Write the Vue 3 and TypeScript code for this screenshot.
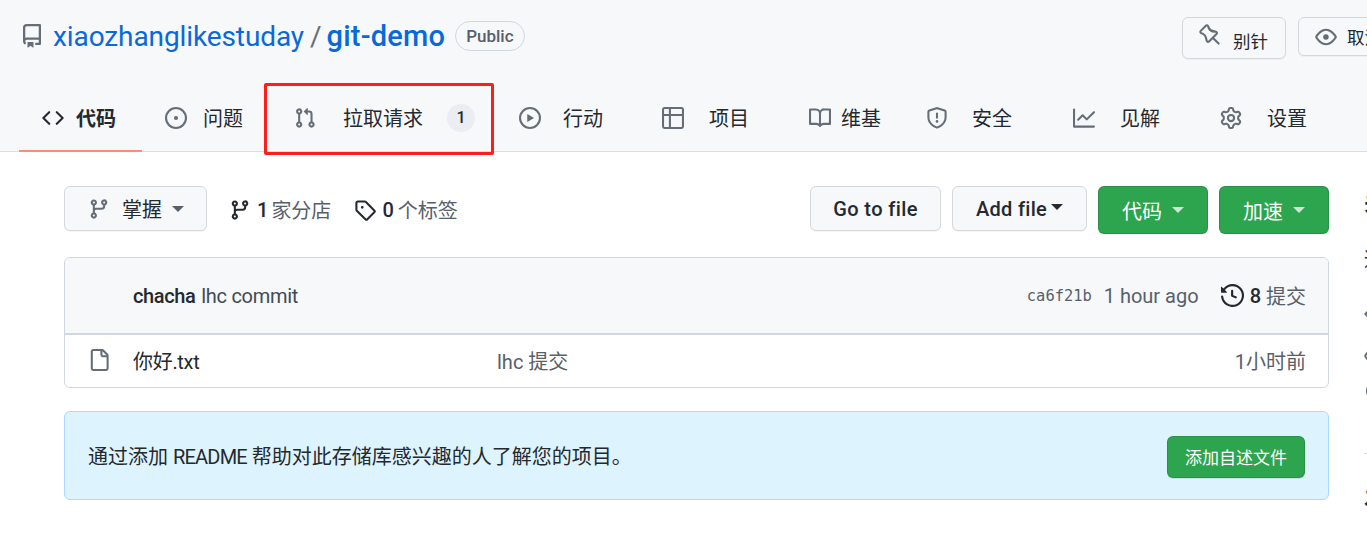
<script setup lang="ts">
interface Tab {
  label: string
  icon: string
  width: number
  gap: number
  active?: boolean
  counter?: string
}

// Octicons 16px
const icons: Record<string, string> = {
  code: 'M4.72 3.22a.75.75 0 0 1 1.06 1.06L2.06 8l3.72 3.72a.75.75 0 1 1-1.06 1.06L.47 8.53a.75.75 0 0 1 0-1.06l4.25-4.25Zm6.56 0a.75.75 0 1 0-1.06 1.06L13.94 8l-3.72 3.72a.75.75 0 1 0 1.06 1.06l4.25-4.25a.75.75 0 0 0 0-1.06l-4.25-4.25Z',
  issue: 'M8 9.5a1.5 1.5 0 1 0 0-3 1.5 1.5 0 0 0 0 3ZM8 0a8 8 0 1 1 0 16A8 8 0 0 1 8 0ZM1.5 8a6.5 6.5 0 1 0 13 0 6.5 6.5 0 0 0-13 0Z',
  pr: 'M1.5 3.25a2.25 2.25 0 1 1 3 2.122v5.256a2.251 2.251 0 1 1-1.5 0V5.372A2.25 2.25 0 0 1 1.5 3.25Zm5.677-.177L9.573.677A.25.25 0 0 1 10 .854V2.5h1A2.5 2.5 0 0 1 13.5 5v5.628a2.251 2.251 0 1 1-1.5 0V5a1 1 0 0 0-1-1h-1v1.646a.25.25 0 0 1-.427.177L7.177 3.427a.25.25 0 0 1 0-.354ZM3.75 2.5a.75.75 0 1 0 0 1.5.75.75 0 0 0 0-1.5Zm0 9.5a.75.75 0 1 0 0 1.5.75.75 0 0 0 0-1.5Zm8.25.75a.75.75 0 1 0 1.5 0 .75.75 0 0 0-1.5 0Z',
  play: 'M8 0a8 8 0 1 1 0 16A8 8 0 0 1 8 0ZM1.5 8a6.5 6.5 0 1 0 13 0 6.5 6.5 0 0 0-13 0Zm4.879-2.773 4.264 2.559a.25.25 0 0 1 0 .428l-4.264 2.559A.25.25 0 0 1 6 10.559V5.442a.25.25 0 0 1 .379-.215Z',
  table: 'M0 1.75C0 .784.784 0 1.75 0h12.5C15.216 0 16 .784 16 1.75v12.5A1.75 1.75 0 0 1 14.25 16H1.75A1.75 1.75 0 0 1 0 14.25ZM6.5 6.5v8h7.75a.25.25 0 0 0 .25-.25V6.5Zm8-1.5V1.75a.25.25 0 0 0-.25-.25H6.5V5Zm-13 1.5v7.75c0 .138.112.25.25.25H5v-8ZM5 5V1.5H1.75a.25.25 0 0 0-.25.25V5Z',
  book: 'M0 1.75A.75.75 0 0 1 .75 1h4.253c1.227 0 2.317.59 3 1.501A3.743 3.743 0 0 1 11.006 1h4.245a.75.75 0 0 1 .75.75v10.5a.75.75 0 0 1-.75.75h-4.507a2.25 2.25 0 0 0-1.591.659l-.622.621a.75.75 0 0 1-1.06 0l-.622-.621A2.25 2.25 0 0 0 5.258 13H.75a.75.75 0 0 1-.75-.75Zm7.251 10.324.004-5.073-.002-2.253A2.25 2.25 0 0 0 5.003 2.5H1.5v9h3.757a3.75 3.75 0 0 1 1.994.574ZM8.755 4.75l-.004 7.322a3.752 3.752 0 0 1 1.992-.572H14.5v-9h-3.495a2.25 2.25 0 0 0-2.25 2.25Z',
  shield: 'M7.467.133a1.748 1.748 0 0 1 1.066 0l5.25 1.68A1.75 1.75 0 0 1 15 3.48V7c0 1.566-.32 3.182-1.303 4.682-.983 1.498-2.585 2.813-5.032 3.855a1.697 1.697 0 0 1-1.33 0c-2.447-1.042-4.049-2.357-5.032-3.855C1.32 10.182 1 8.566 1 7V3.48a1.75 1.75 0 0 1 1.217-1.667Zm.61 1.429a.25.25 0 0 0-.153 0l-5.25 1.68a.25.25 0 0 0-.174.238V7c0 1.358.275 2.666 1.057 3.86.784 1.194 2.121 2.34 4.366 3.297a.196.196 0 0 0 .154 0c2.245-.956 3.582-2.104 4.366-3.298C13.225 9.666 13.5 8.36 13.5 7V3.48a.251.251 0 0 0-.174-.237l-5.25-1.68ZM8.75 4.75v3a.75.75 0 0 1-1.5 0v-3a.75.75 0 0 1 1.5 0ZM9 10.5a1 1 0 1 1-2 0 1 1 0 0 1 2 0Z',
  graph: 'M1.5 1.75V13.5h13.75a.75.75 0 0 1 0 1.5H.75a.75.75 0 0 1-.75-.75V1.75a.75.75 0 0 1 1.5 0Zm14.28 2.53-5.25 5.25a.75.75 0 0 1-1.06 0L7 7.06 4.28 9.78a.751.751 0 0 1-1.042-.018.751.751 0 0 1-.018-1.042l3.25-3.25a.75.75 0 0 1 1.06 0L10 7.94l4.72-4.72a.751.751 0 0 1 1.042.018.751.751 0 0 1 .018 1.042Z',
  gear: 'M8 0a8.2 8.2 0 0 1 .701.031C9.444.095 9.99.645 10.16 1.29l.288 1.107c.018.066.079.158.212.224.231.114.454.243.668.386.123.082.233.09.299.071l1.103-.303c.644-.176 1.392.021 1.82.63.27.385.506.792.704 1.218.315.675.111 1.422-.364 1.891l-.814.806c-.049.048-.098.147-.088.294.016.257.016.515 0 .772-.01.147.038.246.088.294l.814.806c.475.469.679 1.216.364 1.891a7.977 7.977 0 0 1-.704 1.217c-.428.61-1.176.807-1.82.63l-1.102-.302c-.067-.019-.177-.011-.3.071a5.909 5.909 0 0 1-.668.386c-.133.066-.194.158-.211.224l-.29 1.106c-.168.646-.715 1.196-1.458 1.26a8.006 8.006 0 0 1-1.402 0c-.743-.064-1.289-.614-1.458-1.26l-.289-1.106c-.018-.066-.079-.158-.212-.224a5.738 5.738 0 0 1-.668-.386c-.123-.082-.233-.09-.299-.071l-1.103.303c-.644.176-1.392-.021-1.82-.63a8.12 8.12 0 0 1-.704-1.218c-.315-.675-.111-1.422.363-1.891l.815-.806c.05-.048.098-.147.088-.294a6.214 6.214 0 0 1 0-.772c.01-.147-.038-.246-.088-.294l-.815-.806C.635 6.045.431 5.298.746 4.623a7.92 7.92 0 0 1 .704-1.217c.428-.61 1.176-.807 1.82-.63l1.102.302c.067.019.177.011.3-.071.214-.143.437-.272.668-.386.133-.066.194-.158.211-.224l.29-1.106C6.009.645 6.556.095 7.299.03 7.53.01 7.764 0 8 0Zm-.571 1.525c-.036.003-.108.036-.137.146l-.289 1.105c-.147.561-.549.967-.998 1.189-.173.086-.34.183-.5.29-.417.278-.97.423-1.529.27l-1.103-.303c-.109-.03-.175.016-.195.045-.22.312-.412.644-.573.99-.014.031-.021.11.059.19l.815.806c.411.406.562.957.53 1.456a4.709 4.709 0 0 0 0 .582c.032.499-.119 1.05-.53 1.456l-.815.806c-.081.08-.073.159-.059.19.162.346.353.677.573.989.02.03.085.076.195.046l1.102-.303c.56-.153 1.113-.008 1.53.27.161.107.328.204.501.29.447.222.85.629.997 1.189l.289 1.105c.029.109.101.143.137.146a6.6 6.6 0 0 0 1.142 0c.036-.003.108-.036.137-.146l.289-1.105c.147-.561.549-.967.998-1.189.173-.086.34-.183.5-.29.417-.278.97-.423 1.529-.27l1.103.303c.109.029.175-.016.195-.045.22-.313.411-.644.573-.99.014-.031.021-.11-.059-.19l-.815-.806c-.411-.406-.562-.957-.53-1.456a4.709 4.709 0 0 0 0-.582c-.032-.499.119-1.05.53-1.456l.815-.806c.081-.08.073-.159.059-.19a6.464 6.464 0 0 0-.573-.989c-.02-.03-.085-.076-.195-.046l-1.102.303c-.56.153-1.113.008-1.53-.27a4.44 4.44 0 0 0-.501-.29c-.447-.222-.85-.629-.997-1.189l-.289-1.105c-.029-.11-.101-.143-.137-.146a6.6 6.6 0 0 0-1.142 0ZM11 8a3 3 0 1 1-6 0 3 3 0 0 1 6 0ZM9.5 8a1.5 1.5 0 1 0-3.001.001A1.5 1.5 0 0 0 9.5 8Z',
  repo: 'M2 2.5A2.5 2.5 0 0 1 4.5 0h8.75a.75.75 0 0 1 .75.75v12.5a.75.75 0 0 1-.75.75h-2.5a.75.75 0 0 1 0-1.5h1.75v-2h-8a1 1 0 0 0-.714 1.7.75.75 0 1 1-1.072 1.05A2.495 2.495 0 0 1 2 11.5Zm10.5-1h-8a1 1 0 0 0-1 1v6.708A2.486 2.486 0 0 1 4.5 9h8ZM5 12.25a.25.25 0 0 1 .25-.25h3.5a.25.25 0 0 1 .25.25v3.25a.25.25 0 0 1-.4.2l-1.45-1.087a.249.249 0 0 0-.3 0L5.4 15.7a.25.25 0 0 1-.4-.2Z',
  pin: 'M4.456.734a1.75 1.75 0 0 1 2.826.504l.613 1.327a3.081 3.081 0 0 0 2.084 1.707l2.454.584c1.332.317 1.8 1.972.832 2.94L11.06 10l3.72 3.72a.748.748 0 0 1-.332 1.265.75.75 0 0 1-.73-.205L10 11.06l-2.204 2.205c-.968.968-2.623.5-2.94-.832l-.584-2.454a3.081 3.081 0 0 0-1.707-2.084l-1.327-.613a1.75 1.75 0 0 1-.504-2.826L4.456.734ZM5.92 1.866a.251.251 0 0 0-.404-.072L1.794 5.516a.25.25 0 0 0 .072.404l1.328.613A4.582 4.582 0 0 1 5.73 9.63l.584 2.454a.25.25 0 0 0 .42.12l5.47-5.47a.25.25 0 0 0-.12-.42L9.63 6.23a4.582 4.582 0 0 1-3.098-2.537Z',
  eye: 'M8 2c1.981 0 3.671.992 4.933 2.078 1.27 1.091 2.187 2.345 2.637 3.023a1.62 1.62 0 0 1 0 1.798c-.45.678-1.367 1.932-2.637 3.023C11.67 13.008 9.981 14 8 14c-1.981 0-3.671-.992-4.933-2.078C1.797 10.83.88 9.576.43 8.898a1.62 1.62 0 0 1 0-1.798c.45-.677 1.367-1.931 2.637-3.022C4.33 2.992 6.019 2 8 2ZM1.679 7.932a.12.12 0 0 0 0 .136c.411.622 1.241 1.75 2.366 2.717C5.176 11.758 6.527 12.5 8 12.5c1.473 0 2.825-.742 3.955-1.715 1.124-.967 1.954-2.096 2.366-2.717a.12.12 0 0 0 0-.136c-.412-.621-1.242-1.75-2.366-2.717C10.824 4.242 9.473 3.5 8 3.5c-1.473 0-2.825.742-3.955 1.715-1.124.967-1.954 2.096-2.366 2.717ZM8 10a2 2 0 1 1-.001-3.999A2 2 0 0 1 8 10Z',
  branch: 'M9.5 3.25a2.25 2.25 0 1 1 3 2.122V6A2.5 2.5 0 0 1 10 8.5H6a1 1 0 0 0-1 1v1.128a2.251 2.251 0 1 1-1.5 0V5.372a2.25 2.25 0 1 1 1.5 0v1.836A2.493 2.493 0 0 1 6 7h4a1 1 0 0 0 1-1v-.628A2.25 2.25 0 0 1 9.5 3.25Zm-6 0a.75.75 0 1 0 1.5 0 .75.75 0 0 0-1.5 0Zm8.25-.75a.75.75 0 1 0 0 1.5.75.75 0 0 0 0-1.5ZM4.25 12a.75.75 0 1 0 0 1.5.75.75 0 0 0 0-1.5Z',
  tag: 'M1 7.775V2.75C1 1.784 1.784 1 2.75 1h5.025c.464 0 .91.184 1.238.513l6.25 6.25a1.75 1.75 0 0 1 0 2.474l-5.026 5.026a1.75 1.75 0 0 1-2.474 0l-6.25-6.25A1.752 1.752 0 0 1 1 7.775Zm1.5 0c0 .066.026.13.073.177l6.25 6.25a.25.25 0 0 0 .354 0l5.025-5.025a.25.25 0 0 0 0-.354l-6.25-6.25a.25.25 0 0 0-.177-.073H2.75a.25.25 0 0 0-.25.25ZM6 5a1 1 0 1 1 0 2 1 1 0 0 1 0-2Z',
  history: 'm.427 1.927 1.215 1.215a8.002 8.002 0 1 1-1.6 5.685.75.75 0 1 1 1.493-.154 6.5 6.5 0 1 0 1.18-4.458l1.358 1.358A.25.25 0 0 1 3.896 6H.25A.25.25 0 0 1 0 5.75V2.104a.25.25 0 0 1 .427-.177ZM7.75 4a.75.75 0 0 1 .75.75v2.992l2.028.812a.75.75 0 0 1-.557 1.392l-2.5-1A.751.751 0 0 1 7 8.25v-3.5A.75.75 0 0 1 7.75 4Z',
  file: 'M2 1.75C2 .784 2.784 0 3.75 0h6.586c.464 0 .909.184 1.237.513l2.914 2.914c.329.328.513.773.513 1.237v9.586A1.75 1.75 0 0 1 13.25 16h-9.5A1.75 1.75 0 0 1 2 14.25Zm1.75-.25a.25.25 0 0 0-.25.25v12.5c0 .138.112.25.25.25h9.5a.25.25 0 0 0 .25-.25V6h-2.75A1.75 1.75 0 0 1 9 4.25V1.5Zm6.75.062V4.25c0 .138.112.25.25.25h2.688l-.011-.013-2.914-2.914-.013-.011Z',
}

const tabs: Tab[] = [
  { label: '代码', icon: 'code', width: 123, gap: 12, active: true },
  { label: '问题', icon: 'issue', width: 129, gap: 16 },
  { label: '拉取请求', icon: 'pr', width: 225, gap: 27, counter: '1' },
  { label: '行动', icon: 'play', width: 143, gap: 22 },
  { label: '项目', icon: 'table', width: 147, gap: 25 },
  { label: '维基', icon: 'book', width: 117, gap: 10 },
  { label: '安全', icon: 'shield', width: 147, gap: 24 },
  { label: '见解', icon: 'graph', width: 147, gap: 25 },
  { label: '设置', icon: 'gear', width: 110, gap: 25 },
]
</script>

<template>
  <div class="page">
    <header class="repo-head">
      <div class="title-row">
        <div class="title">
          <svg class="icon repo-icon" viewBox="0 0 16 16"><path :d="icons.repo" /></svg>
          <a class="owner">xiaozhanglikestuday</a>
          <span class="slash">/</span>
          <a class="name">git-demo</a>
          <span class="label">Public</span>
        </div>
        <div class="head-actions">
          <button class="head-btn pin-btn">
            <svg class="icon" viewBox="0 0 16 16"><path :d="icons.pin" /></svg>
            <span class="pin-text">别针</span>
          </button>
          <button class="head-btn watch-btn">
            <svg class="icon" viewBox="0 0 16 16"><path :d="icons.eye" /></svg>
            <span>取消关注</span>
          </button>
        </div>
      </div>
      <nav class="tabs">
        <a v-for="tab in tabs" :key="tab.label" class="tab" :class="{ active: tab.active }" :style="{ width: tab.width + 'px', gap: tab.gap + 'px' }">
          <svg class="icon" viewBox="0 0 16 16"><path :d="icons[tab.icon]" /></svg>
          <span class="tab-text">{{ tab.label }}</span>
          <span v-if="tab.counter" class="counter">{{ tab.counter }}</span>
        </a>
      </nav>
      <div class="highlight"></div>
    </header>

    <main class="content">
      <div class="repo-main">
        <div class="toolbar">
          <button class="btn branch-btn">
            <svg class="icon" viewBox="0 0 16 16"><path :d="icons.branch" /></svg>
            <span>掌握</span>
            <i class="caret"></i>
          </button>
          <a class="meta-link branches">
            <svg class="icon dark" viewBox="0 0 16 16"><path :d="icons.branch" /></svg>
            <b>1</b>
            <span class="meta-text">家分店</span>
          </a>
          <a class="meta-link tags">
            <svg class="icon dark" viewBox="0 0 16 16"><path :d="icons.tag" /></svg>
            <b>0</b>
            <span class="meta-text">个标签</span>
          </a>
          <div class="toolbar-right">
            <button class="btn go-btn">Go to file</button>
            <button class="btn add-btn">Add file<i class="caret dark-caret"></i></button>
            <button class="btn green">代码<i class="caret light-caret"></i></button>
            <button class="btn green">加速<i class="caret light-caret"></i></button>
          </div>
        </div>

        <section class="files">
          <div class="commit">
            <span class="author">chacha</span>
            <span class="message">lhc commit</span>
            <span class="commit-right">
              <code class="sha">ca6f21b</code>
              <span class="ago">1 hour ago</span>
              <span class="history">
                <svg class="icon dark" viewBox="0 0 16 16"><path :d="icons.history" /></svg>
                <b>8</b>
                <span class="history-text">提交</span>
              </span>
            </span>
          </div>
          <div class="file-row">
            <svg class="icon" viewBox="0 0 16 16"><path :d="icons.file" /></svg>
            <span class="file-name">你好.txt</span>
            <span class="file-msg">lhc 提交</span>
            <span class="file-age">1小时前</span>
          </div>
        </section>

        <section class="readme">
          <span>通过添加 <span class="readme-word">README</span> 帮助对此存储库感兴趣的人了解您的项目。</span>
          <button class="readme-btn">添加自述文件</button>
        </section>
      </div>

      <!-- 右侧栏只露出一条边 -->
      <aside class="side">
        <strong class="side-title">关于</strong>
        <span class="side-desc">通过</span>
        <svg class="icon side-icon code-icon" viewBox="0 0 16 16"><path :d="icons.code" /></svg>
        <svg class="icon side-icon eye-icon" viewBox="0 0 16 16"><path :d="icons.eye" /></svg>
        <svg class="icon side-icon dot-icon" viewBox="0 0 16 16"><path :d="icons.issue" /></svg>
        <hr class="side-rule" />
        <strong class="side-release">发布</strong>
      </aside>
    </main>
  </div>
</template>

<style scoped>
.page {
  width: 1367px;
  height: 537px;
  overflow: hidden;
  background: #fff;
  font-family: Roboto, "Noto Sans CJK SC", sans-serif;
  font-size: 20px;
  color: #24292f;
}

.icon {
  width: 22px;
  height: 22px;
  fill: #656d76;
  flex: none;
}

.icon.dark {
  fill: #24292f;
}

.repo-head {
  position: relative;
  height: 152px;
  box-sizing: border-box;
  background: #f6f8fa;
  border-bottom: 1px solid #d8dee4;
}

.title-row {
  height: 84px;
  display: flex;
  justify-content: space-between;
  padding-left: 20px;
}

.title {
  display: flex;
  align-items: center;
  height: 72px;
}

.repo-icon {
  width: 24px;
  height: 24px;
  margin-right: 9px;
}

.owner {
  font-size: 28px;
  letter-spacing: -0.1px;
  color: #0969da;
}

.slash {
  font-size: 28px;
  color: #656d76;
  margin: 0 5px 0 6px;
}

.name {
  font-size: 29px;
  font-weight: 500;
  letter-spacing: 0.2px;
  color: #0969da;
}

.label {
  margin-left: 10px;
  height: 28px;
  padding: 0 10px;
  border: 1px solid #d0d7de;
  border-radius: 15px;
  font-size: 17px;
  font-weight: 500;
  line-height: 28px;
  color: #57606a;
}

.head-actions {
  display: flex;
  align-items: flex-start;
  gap: 12px;
  padding-top: 17px;
  width: 185px;
  overflow: hidden;
  flex: none;
}

.head-btn {
  display: flex;
  align-items: center;
  flex: none;
  box-sizing: border-box;
  border: 1px solid #d5d8da;
  border-radius: 6px;
  background: #f6f8fa;
  box-shadow: 0 1px 0 rgba(27, 31, 36, 0.04);
  font: inherit;
  font-size: 17.5px;
  color: #24292f;
  padding: 0 0 0 16px;
}

.pin-btn {
  width: 104px;
  height: 42px;
  gap: 12px;
}

.pin-btn .icon {
  margin-bottom: 6px;
}

.pin-text {
  padding-top: 4px;
}

.watch-btn {
  width: 120px;
  height: 39px;
  gap: 10px;
}

.tabs {
  display: flex;
  height: 67px;
  padding-left: 19px;
}

.tab {
  position: relative;
  display: flex;
  align-items: center;
  box-sizing: border-box;
  height: 67px;
  padding-left: 23px;
  font-size: 20px;
  white-space: nowrap;
  flex: none;
}

.tab.active {
  font-weight: 700;
}

.tab.active::after {
  content: "";
  position: absolute;
  left: 0;
  right: 0;
  bottom: -1px;
  height: 2px;
  background: #fd8c73;
}

.tab.active .icon {
  fill: #24292f;
}

.counter {
  min-width: 28px;
  height: 28px;
  margin-left: -3px;
  border-radius: 14px;
  background: #eaeef2;
  font-size: 16px;
  font-weight: 500;
  line-height: 28px;
  text-align: center;
}

.highlight {
  position: absolute;
  left: 264px;
  top: 83px;
  width: 230px;
  height: 72px;
  box-sizing: border-box;
  border: 3px solid #fb1f1b;
  border-radius: 2px;
}

.content {
  display: flex;
  padding: 34px 0 0 64px;
}

.repo-main {
  width: 1265px;
  flex: none;
}

.toolbar {
  display: flex;
  align-items: flex-start;
  height: 48px;
}

.btn {
  display: inline-flex;
  align-items: center;
  justify-content: center;
  box-sizing: border-box;
  height: 45px;
  border: 1px solid #d5d8da;
  border-radius: 6px;
  background: #f6f8fa;
  box-shadow: 0 1px 0 rgba(27, 31, 36, 0.04);
  font: inherit;
  font-weight: 500;
  color: #24292f;
  padding: 0;
}

.branch-btn {
  width: 143px;
  justify-content: flex-start;
  gap: 12px;
  padding-left: 23px;
  font-weight: 400;
}

.caret {
  display: inline-block;
  width: 0;
  height: 0;
  border: 6px solid transparent;
  border-top-color: #57606a;
  border-bottom-width: 0;
}

.branch-btn .caret {
  margin-left: -2px;
}

.meta-link {
  display: inline-flex;
  align-items: center;
  height: 47px;
  color: #57606a;
  white-space: nowrap;
}

.meta-link b {
  color: #24292f;
  font-weight: 500;
  margin-left: 6px;
}

.meta-text {
  margin-left: 3px;
}

.branches {
  margin-left: 22px;
}

.tags {
  margin-left: 23px;
}

.tags .meta-text {
  margin-left: 4px;
}

.toolbar-right {
  margin-left: auto;
  display: flex;
  gap: 11px;
}

.go-btn {
  width: 131px;
  letter-spacing: 0.4px;
}

.add-btn {
  width: 135px;
  gap: 4px;
  letter-spacing: 0.3px;
}

.dark-caret {
  border-top-color: #24292f;
  margin-bottom: 4px;
}

.btn.green {
  width: 110px;
  height: 48px;
  gap: 10px;
  background: #2da44e;
  border-color: rgba(27, 31, 36, 0.15);
  color: #fff;
  font-weight: 400;
}

.light-caret {
  border-top-color: rgba(255, 255, 255, 0.75);
}

.files {
  margin-top: 23px;
  border: 1px solid #d0d7de;
  border-radius: 6px;
  overflow: hidden;
}

.commit {
  display: flex;
  align-items: center;
  height: 75px;
  padding: 0 22px 0 68px;
  background: #f6f8fa;
  border-bottom: 2px solid #d0d7de;
  white-space: nowrap;
}

.author {
  font-weight: 500;
  letter-spacing: -0.4px;
}

.message {
  margin-left: 6px;
  letter-spacing: -0.3px;
  color: #424a53;
}

.commit-right {
  margin-left: auto;
  display: flex;
  align-items: center;
  color: #57606a;
}

.sha {
  font-family: "DejaVu Sans Mono", monospace;
  font-size: 15.4px;
  margin-right: 12px;
}

.history {
  display: inline-flex;
  align-items: center;
  margin-left: 22px;
}

.history .icon {
  width: 23px;
  height: 23px;
  margin-right: 6px;
}

.history b {
  color: #24292f;
  font-weight: 500;
}

.history-text {
  margin-left: 5px;
}

.file-row {
  display: flex;
  align-items: center;
  height: 50px;
  padding: 0 22px 2px 23px;
  white-space: nowrap;
}

.file-name {
  margin-left: 23px;
  width: 364px;
  letter-spacing: -0.3px;
}

.file-msg {
  color: #57606a;
}

.file-age {
  margin-left: auto;
  color: #57606a;
}

.readme {
  display: flex;
  align-items: center;
  justify-content: space-between;
  box-sizing: border-box;
  height: 89px;
  margin-top: 23px;
  padding: 0 23px;
  background: #ddf4ff;
  border: 1px solid #aadaff;
  border-radius: 6px;
}

.readme-word {
  letter-spacing: -0.8px;
}

.readme-btn {
  width: 138px;
  height: 42px;
  margin-top: 2px;
  border: 1px solid rgba(27, 31, 36, 0.15);
  border-radius: 6px;
  background: #2da44e;
  box-shadow: 0 1px 0 rgba(27, 31, 36, 0.1);
  color: #fff;
  font: inherit;
  font-size: 17px;
  padding: 0;
}

.side {
  flex: 1;
  display: flex;
  flex-direction: column;
  align-items: flex-start;
  padding-left: 35px;
  overflow: hidden;
  white-space: nowrap;
}

.side-title {
  margin-top: 3px;
  line-height: 28px;
  font-size: 22px;
}

.side-desc {
  margin-top: 29px;
  line-height: 28px;
}

.side-icon {
  width: 20px;
  height: 20px;
}

.code-icon {
  margin-top: 30px;
}

.eye-icon {
  margin-top: 22px;
}

.dot-icon {
  margin-top: 15px;
  margin-left: 2px;
}

.side-rule {
  align-self: stretch;
  margin: 52px 0 0;
  border: 0;
  height: 1px;
  background: #d8dee4;
}

.side-release {
  margin-top: 30px;
  line-height: 28px;
  font-size: 22px;
}
</style>
